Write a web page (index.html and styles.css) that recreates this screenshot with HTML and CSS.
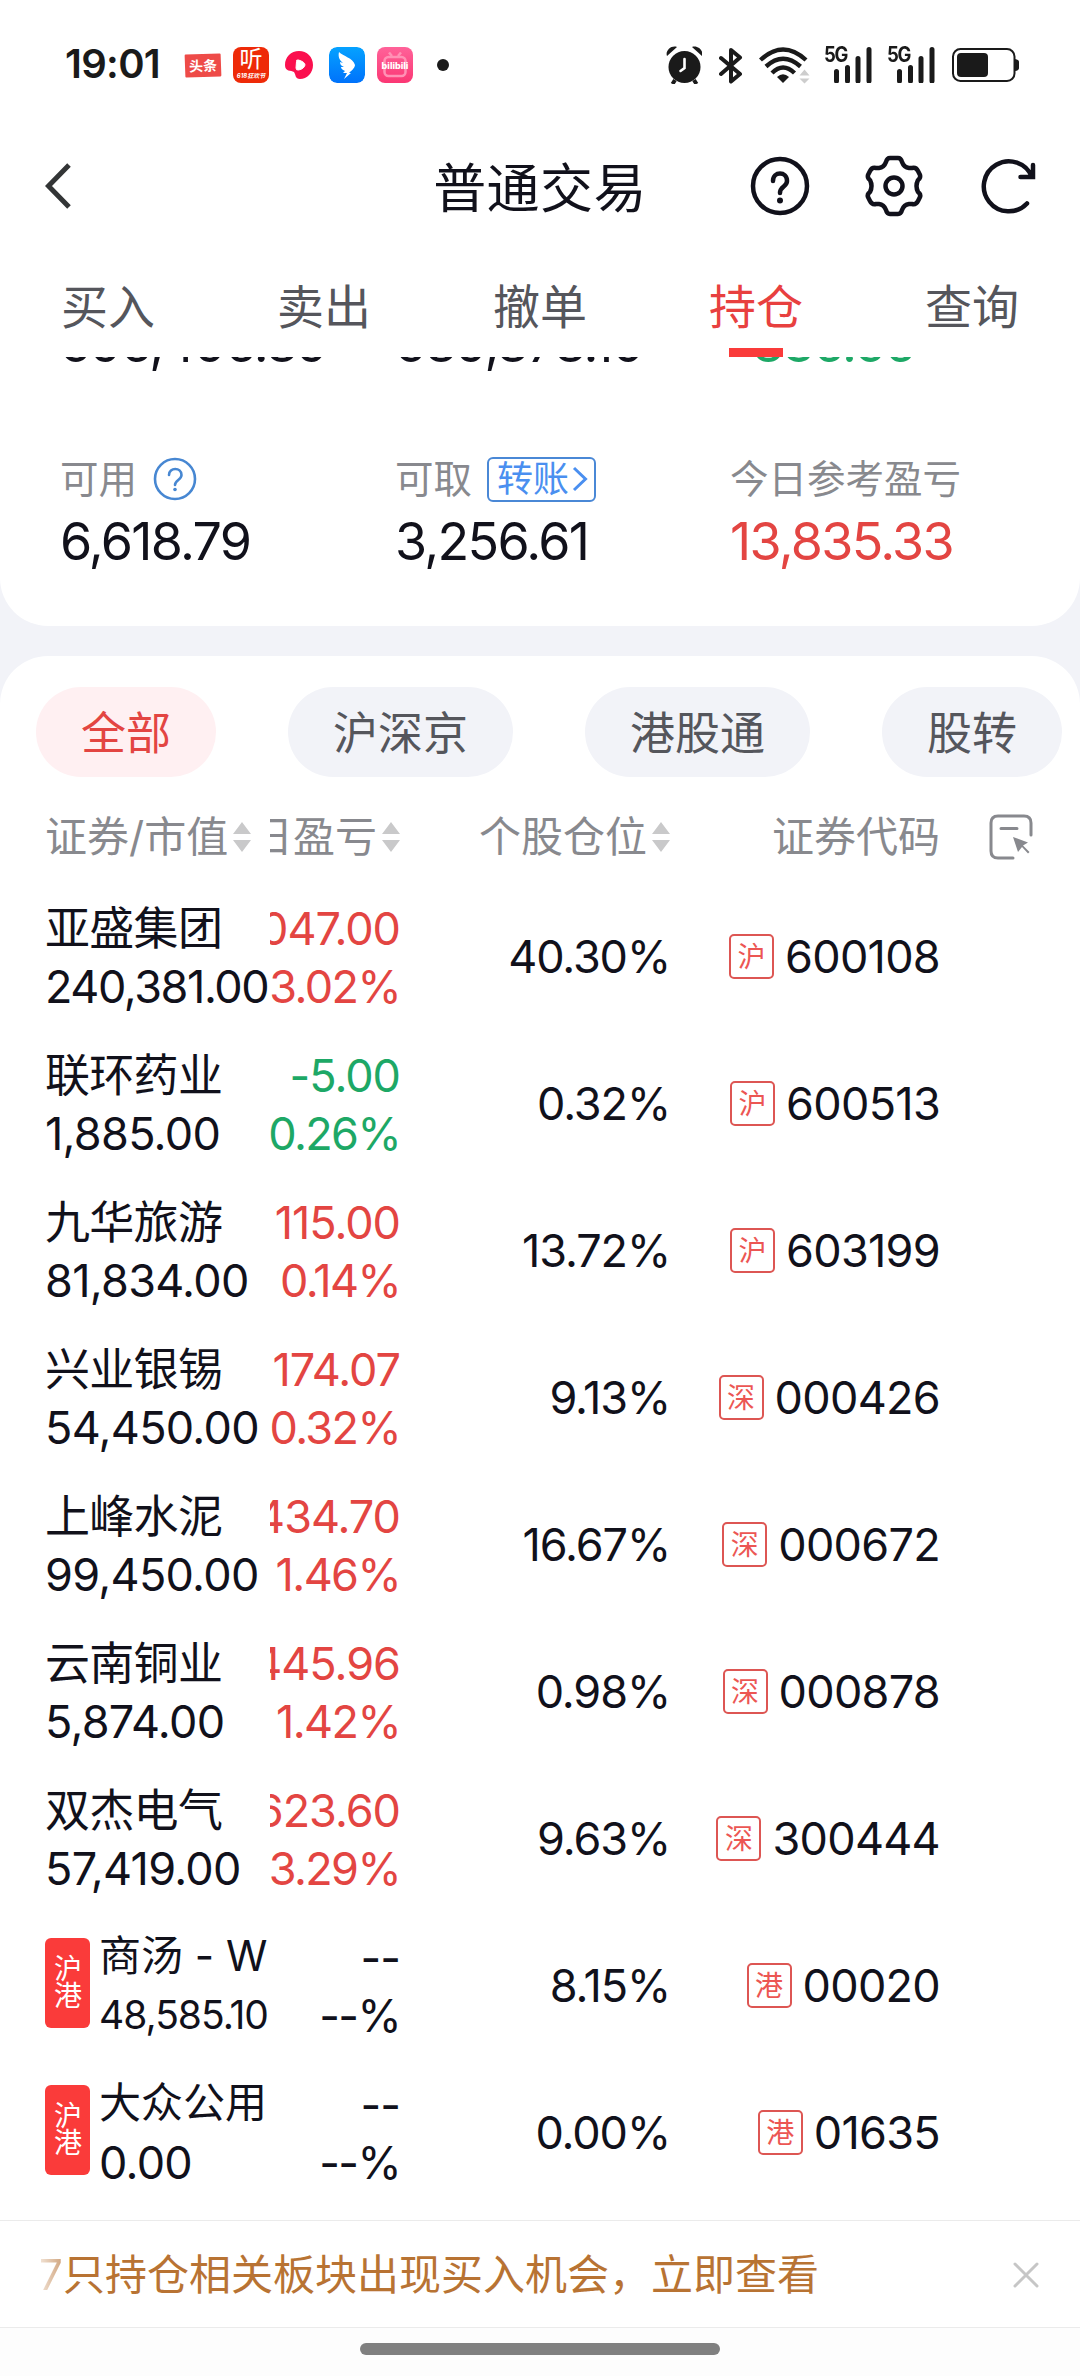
FILE: index.html
```html
<!DOCTYPE html>
<html lang="zh-CN">
<head>
<meta charset="utf-8">
<title>普通交易</title>
<link rel="stylesheet" href="styles.css">
</head>
<body>
<svg class="defs" width="0" height="0" aria-hidden="true">
  <symbol id="sort" viewBox="0 0 18 30"><path d="M9 0 18 12H0ZM0 18H18L9 30Z" fill="#c9c9ca"/></symbol>
  <symbol id="bars" viewBox="0 0 38 36"><path d="M2.500 24.500V34M13.500 20.500V34M24 11.500V34M35 2.500V34" stroke="#1a1a1a" stroke-width="5" stroke-linecap="round" fill="none"/></symbol>
</svg>
<div class="app">
  <div class="status">
    <span class="clock">19:01</span>
    <span class="app-icon toutiao">头条</span>
    <span class="app-icon ting"><b>听</b><i>618狂欢节</i></span>
    <svg class="app-icon tomato" width="28" height="30" viewBox="0 0 28 30"><path d="M14 1C22 1 28 7 28 15S22 29 15 29C10 29 11 25 9 22C6 20 0 22 0 15C0 7 6 1 14 1Z" fill="#fb0f4e"/><path d="M11.500 11.500Q11 9.500 13.500 10Q20 12 20 15Q19 19 13.500 20Q11 20.500 11 18Z" fill="#fff" stroke="#fff"/></svg>
    <svg class="app-icon" width="36" height="36" viewBox="0 0 36 36"><defs><linearGradient id="dt" x2="0" y2="1"><stop stop-color="#05a2ff"/><stop offset="1" stop-color="#0072fb"/></linearGradient></defs><rect width="36" height="36" rx="8" fill="url(#dt)"/><path d="M10 5C14 9 24 11 26 18C26 21 22 24 20 26H22L15 32L18 26H14L16 24C13 23 12 21 12 20L15 20C12 19 11 17 11 15L14 16C10 13 9 9 10 5Z" fill="#fff"/></svg>
    <span class="app-icon bili">
      <svg width="36" height="36" viewBox="0 0 36 36" fill="none" stroke="#ff91b5" stroke-width="2.500"><rect x="7.500" y="10" width="21" height="19" rx="4"/><path d="M12 5.500 15 9M24 5.500 21 9"/></svg>
      <span>bilibili</span>
    </span>
    <i class="dot"></i>
    <div class="system">
      <svg class="alarm" width="36" height="38" viewBox="0 0 36 38"><circle cx="18.500" cy="21" r="16" fill="#1a1a1a"/><path d="M1 10C-1 5 5-1 11 1ZM36 10C38 5 32-1 26 1Z" fill="#1a1a1a"/><path d="M9 34 6.500 38M28 34 30.500 38" stroke="#1a1a1a" stroke-width="4"/><path d="M18.500 13V22L14.500 25" fill="none" stroke="#fff" stroke-width="2.600" stroke-linecap="round"/></svg>
      <svg class="bt" width="24" height="37" viewBox="0 0 24 37" fill="none" stroke="#1a1a1a" stroke-width="4" stroke-linejoin="round" stroke-linecap="round"><path d="M2 11 21 27 12 34.500V3L21 10.500 2 27"/></svg>
      <svg class="wifi" width="51" height="37" viewBox="0 0 51 37" fill="none" stroke="#1a1a1a" stroke-width="4.400"><path d="M1.500 13Q24-8 47 13M7 19.500Q24 4 41.500 19.500M13 26Q24 15 35.500 26"/><path d="M24 36 18 30Q24 24.500 30 30Z" fill="#1a1a1a" stroke="none"/><path d="M45.500 22.500 50.500 28.500H40.500ZM40.500 31.500H50.500L45.500 36.500Z" fill="#cdcdcd" stroke="none"/></svg>
      <span class="signal"><em>5G</em><svg width="38" height="36"><use href="#bars"/></svg></span>
      <span class="signal"><em>5G</em><svg width="38" height="36"><use href="#bars"/></svg></span>
      <svg class="battery" width="67" height="34" viewBox="0 0 67 34"><rect x="1" y="1" width="61.500" height="32" rx="7.500" fill="none" stroke="#1a1a1a" stroke-width="2"/><rect x="5" y="5" width="31" height="24" rx="4" fill="#1a1a1a"/><path d="M63 11Q67 11.500 67 14V20Q67 22.500 63 23Z" fill="#1a1a1a"/></svg>
    </div>
  </div>

  <header class="header">
    <svg class="back" width="26" height="46" viewBox="0 0 26 46" fill="none" stroke="#333536" stroke-width="5"><path d="M24 2 3.500 23 24 44"/></svg>
    <h1>普通交易</h1>
    <div class="tools">
      <svg width="62" height="62" viewBox="-31 -31 62 62" fill="none" stroke="#11111b" stroke-width="4.500" stroke-linecap="round"><circle r="27"/><path d="M-7-5C-7-15 7-15 7-5C7 1 0 0 0 7"/><circle cy="14.500" r="3" fill="#11111b" stroke="none"/></svg>
      <svg width="62" height="62" viewBox="-31 -31 62 62" fill="none" stroke="#11111b" stroke-width="4.500" stroke-linejoin="round"><circle r="8.500"/><path d="M-4-28H4Q7-28 8-24Q10-18.500 15-18H18Q22-19 24-15L26-11Q27-8 24-6Q21 0 24 6Q27 8 26 11L24 15Q22 19 18 18H15Q10 18.500 8 24Q7 28 4 28H-4Q-7 28-8 24Q-10 18.500-15 18H-18Q-22 19-24 15L-26 11Q-27 8-24 6Q-21 0-24-6Q-27-8-26-11L-24-15Q-22-19-18-18H-15Q-10-18.500-8-24Q-7-28-4-28Z"/></svg>
      <svg width="62" height="62" viewBox="-31 -31 62 62" fill="none" stroke="#11111b" stroke-width="4.500" stroke-linecap="round"><path d="M19 17.500A25 25 0 1 1 24-9M25-21V-9H12.500"/></svg>
    </div>
  </header>

  <nav class="tabs">
    <a>买入</a><a>卖出</a><a>撤单</a><a class="active">持仓</a><a>查询</a>
  </nav>

  <section class="summary">
    <div class="figures clipped"><b>596,496.89</b><b>589,878.10</b><b class="down">-836.56</b></div>
    <div class="figures">
      <div><p>可用<svg class="hint" width="44" height="44" viewBox="-22 -22 44 44" fill="none" stroke="#4787d2" stroke-width="2.600" stroke-linecap="round"><circle r="20"/><path d="M-6-4C-6-12 6.500-12 6.500-4C6.500 1 0 1 0 6"/><circle cy="10.500" r="1.800" fill="#4787d2" stroke="none"/></svg></p><b>6,618.79</b></div>
      <div><p>可取<span class="transfer">转账<svg width="16" height="26" viewBox="0 0 16 26" fill="none" stroke="#4a8ff0" stroke-width="3"><path d="M2 2 13.500 13 2 24"/></svg></span></p><b>3,256.61</b></div>
      <div><p>今日参考盈亏</p><b class="up">13,835.33</b></div>
    </div>
  </section>

  <section class="holdings">
    <div class="filters"><span class="active">全部</span><span>沪深京</span><span>港股通</span><span>股转</span></div>
    <div class="row head">
      <div class="c1">证券/市值<svg width="18" height="30"><use href="#sort"/></svg></div>
      <div class="c2"><span>当日盈亏</span><svg width="18" height="30"><use href="#sort"/></svg></div>
      <div class="c3">个股仓位<svg width="18" height="30"><use href="#sort"/></svg></div>
      <div class="c4">证券代码</div>
      <svg class="pick" width="44" height="46" viewBox="0 0 44 46" fill="none" stroke="#88898e" stroke-width="3"><path d="M42 21V9Q42 2 35 2H9Q2 2 2 9V37Q2 44 9 44H24M12 14.500H28" stroke-linecap="round"/><path d="M24 23 39 28.500 34 31.500 40.500 38 39 39.500 33 33 29 38Z" fill="#88898e" stroke="none"/></svg>
    </div>
    <div class="row"><div class="c1"><p>亚盛集团</p><p class="long">240,381.00</p></div><div class="c2 up"><p>7,047.00</p><p>3.02%</p></div><div class="c3">40.30%</div><div class="c4"><i>沪</i>600108</div></div>
    <div class="row"><div class="c1"><p>联环药业</p><p>1,885.00</p></div><div class="c2 down"><p>-5.00</p><p>-0.26%</p></div><div class="c3">0.32%</div><div class="c4"><i>沪</i>600513</div></div>
    <div class="row"><div class="c1"><p>九华旅游</p><p>81,834.00</p></div><div class="c2 up"><p>115.00</p><p>0.14%</p></div><div class="c3">13.72%</div><div class="c4"><i>沪</i>603199</div></div>
    <div class="row"><div class="c1"><p>兴业银锡</p><p>54,450.00</p></div><div class="c2 up"><p>174.07</p><p>0.32%</p></div><div class="c3">9.13%</div><div class="c4"><i>深</i>000426</div></div>
    <div class="row"><div class="c1"><p>上峰水泥</p><p>99,450.00</p></div><div class="c2 up"><p>1,434.70</p><p>1.46%</p></div><div class="c3">16.67%</div><div class="c4"><i>深</i>000672</div></div>
    <div class="row"><div class="c1"><p>云南铜业</p><p>5,874.00</p></div><div class="c2 up"><p>445.96</p><p>1.42%</p></div><div class="c3">0.98%</div><div class="c4"><i>深</i>000878</div></div>
    <div class="row"><div class="c1"><p>双杰电气</p><p>57,419.00</p></div><div class="c2 up"><p>1,623.60</p><p>3.29%</p></div><div class="c3">9.63%</div><div class="c4"><i>深</i>300444</div></div>
    <div class="row hk"><div class="c1"><i>沪<br>港</i><div><p class="name">商汤 - W</p><p class="small">48,585.10</p></div></div><div class="c2"><p>--</p><p>--%</p></div><div class="c3">8.15%</div><div class="c4"><i>港</i>00020</div></div>
    <div class="row hk"><div class="c1"><i>沪<br>港</i><div><p class="name">大众公用</p><p>0.00</p></div></div><div class="c2"><p>--</p><p>--%</p></div><div class="c3">0.00%</div><div class="c4"><i>港</i>01635</div></div>
  </section>

  <div class="notice">
    <p><span>7</span>只持仓相关板块出现买入机会，立即查看</p>
    <svg width="26" height="26" viewBox="0 0 26 26" stroke="#c6c6c6" stroke-width="3" stroke-linecap="round"><path d="M2 2 24 24M24 2 2 24"/></svg>
  </div>
  <div class="home"><i></i></div>
</div>
</body>
</html>
```
FILE: styles.css
```css
* { box-sizing: border-box; margin: 0; padding: 0; }
body { background: #fff; }
i, em { font-style: normal; }
b, h1 { font-weight: inherit; }
.defs { position: absolute; }
svg { display: block; flex: none; }

.app {
  width: 1080px;
  height: 2376px;
  overflow: hidden;
  display: flex;
  flex-direction: column;
  background: #f2f3f8;
  color: #11111b;
  font: 390 45px/1 Inter, "Noto Sans CJK SC", sans-serif;
  white-space: nowrap;
}

/* status bar */
.status { height: 130px; flex: none; display: flex; align-items: center; padding: 0 61px 0 65px; background: #fff; color: #1a1a1a; }
.clock { width: 120px; font-size: 40px; font-weight: 600; letter-spacing: -0.7px; line-height: 44px; margin-top: -2px; }
.app-icon { flex: none; width: 36px; height: 36px; margin-right: 12px; border-radius: 8px; color: #fff; }
.toutiao { height: 23px; border-radius: 1px; background: #ee4b48; font-size: 14px; font-weight: 700; line-height: 23px; text-align: center; transform: rotate(-2deg); }
.ting { background: #ee2a08; display: flex; flex-direction: column; align-items: center; }
.ting b { font-size: 23px; line-height: 25px; }
.ting i { font-size: 6px; line-height: 8px; font-weight: 700; font-style: italic; }
.tomato { width: 28px; height: 30px; margin: 0 16px 0 4px; border-radius: 0; }
.bili { display: grid; background: linear-gradient(#ff6299, #fb3774); }
.bili > * { grid-area: 1 / 1; }
.bili span { place-self: center; font-size: 9px; font-weight: 800; }
.dot { width: 12px; height: 12px; margin-left: 12px; border-radius: 50%; background: #1a1a1a; }
.system { margin-left: auto; display: flex; align-items: center; }
.bt { margin-left: 17px; }
.wifi { margin-left: 16px; }
.signal { display: grid; width: 48px; margin-left: 14px; }
.signal + .signal { margin-left: 15px; }
.signal > * { grid-area: 1 / 1; }
.signal svg { justify-self: end; }
.signal em { font-size: 21px; font-weight: 700; line-height: 16px; letter-spacing: -1.5px; transform: scaleX(0.88); transform-origin: 0 0; }
.battery { margin-left: 17px; }

/* title bar */
.header { height: 112px; flex: none; display: grid; grid-template-columns: 300px 1fr 300px; align-items: center; background: #fff; }
.back { margin-left: 45px; }
.header h1 { text-align: center; font-size: 53px; line-height: 60px; letter-spacing: 0.4px; padding-top: 5px; }
.tools { display: flex; gap: 52px; justify-content: flex-end; padding-right: 41px; }

/* tabs */
.tabs { height: 115px; flex: none; display: grid; grid-template-columns: repeat(5, 1fr); background: #fff; color: #55565c; }
.tabs a { height: 115px; font-size: 47px; line-height: 129px; text-align: center; position: relative; }
.tabs .active { color: #e8403f; }
.tabs .active::after { content: ""; position: absolute; left: 81px; bottom: 0; width: 54px; height: 9px; background: #fa3b3a; }

/* account summary */
.summary { height: 269px; flex: none; overflow: hidden; background: #fff; border-radius: 0 0 48px 48px; }
.figures { display: grid; grid-template-columns: repeat(3, 335px); padding-left: 60px; margin-top: 87px; }
.figures.clipped { margin-top: -39px; }
.figures b { display: block; font-size: 52px; line-height: 52px; letter-spacing: -1.7px; }
.figures p { display: flex; align-items: center; height: 44px; margin-bottom: 15px; color: #88898e; font-size: 38.500px; }
.hint { margin-left: 16px; }
.transfer { display: flex; align-items: center; gap: 3px; width: 109px; height: 45px; margin-left: 15px; padding-left: 8px; border: 2px solid #4a88d6; border-radius: 6px; color: #4a8ff0; font-size: 36px; }
.up, .figures .up { color: #e34542; }
.down { color: #1da866; }

/* holdings */
.holdings { height: 1564px; flex: none; margin-top: 30px; padding-top: 31px; background: #fff; border-radius: 48px 48px 0 0; }
.filters { display: flex; gap: 72px; padding-left: 36px; }
.filters span { height: 90px; padding: 0 45px; border-radius: 45px; background: #f2f3f8; color: #55565c; line-height: 94px; }
.filters .active { background: #fff0f2; color: #e34542; }
.row { display: grid; grid-template-columns: 225px 130px 270px 270px 1fr; align-items: center; height: 147px; padding-left: 45px; letter-spacing: -0.7px; }
.row .c1 { min-width: 0; }
.row p { height: 58px; line-height: 58px; }
.row .long { letter-spacing: -1.4px; }
.c2 { overflow: hidden; display: flex; flex-direction: column; align-items: flex-end; letter-spacing: -1px; }
.c2 p:last-child { letter-spacing: -1.6px; }
.c3, .c4 { text-align: right; margin-top: -2px; }
.c3 { letter-spacing: -1.1px; }
.row.head { height: 107px; padding-top: 12px; color: #88898e; font-size: 42px; letter-spacing: 0; }
.head > div { display: flex; flex-direction: row; align-items: center; justify-content: flex-end; gap: 5px; line-height: 60px; margin-top: 0; letter-spacing: 0; }
.head > .c1 { justify-content: flex-start; }
.head .c2 span { flex: none; }
.pick { margin-left: 49px; }
.c4 { display: flex; align-items: center; justify-content: flex-end; }
.c4 i { width: 45px; height: 45px; margin-right: 11px; border: 2px solid #dd5653; border-radius: 5px; color: #ec5653; font-size: 28px; line-height: 42px; text-align: center; letter-spacing: 0; }
.hk .c1 { display: flex; align-items: center; gap: 9px; }
.hk .c1 i { width: 45px; height: 90px; margin-top: -7px; padding: 18px 0 0 1px; border-radius: 6px; background: #fa3b3a; color: #fff; font-size: 28px; line-height: 27px; text-align: center; letter-spacing: 0; }
.hk .name { font-size: 42px; line-height: 54px; letter-spacing: 0; }
.hk .small { font-size: 39px; line-height: 55px; letter-spacing: -1px; }

/* notice */
.notice { height: 108px; flex: none; display: flex; align-items: center; justify-content: space-between; padding: 2px 41px 0 39px; border: solid #ebebeb; border-width: 1px 0; background: #fff; color: #b87333; font-size: 42px; }
.notice span { display: inline-block; width: 24px; color: transparent; background: linear-gradient(90deg, #f3e6da, #cfa27a); -webkit-background-clip: text; background-clip: text; }
.home { flex: 1; padding-top: 15px; background: #fdfdfd; }
.home i { display: block; width: 360px; height: 12px; margin: 0 auto; border-radius: 6px; background: #808080; }
```
